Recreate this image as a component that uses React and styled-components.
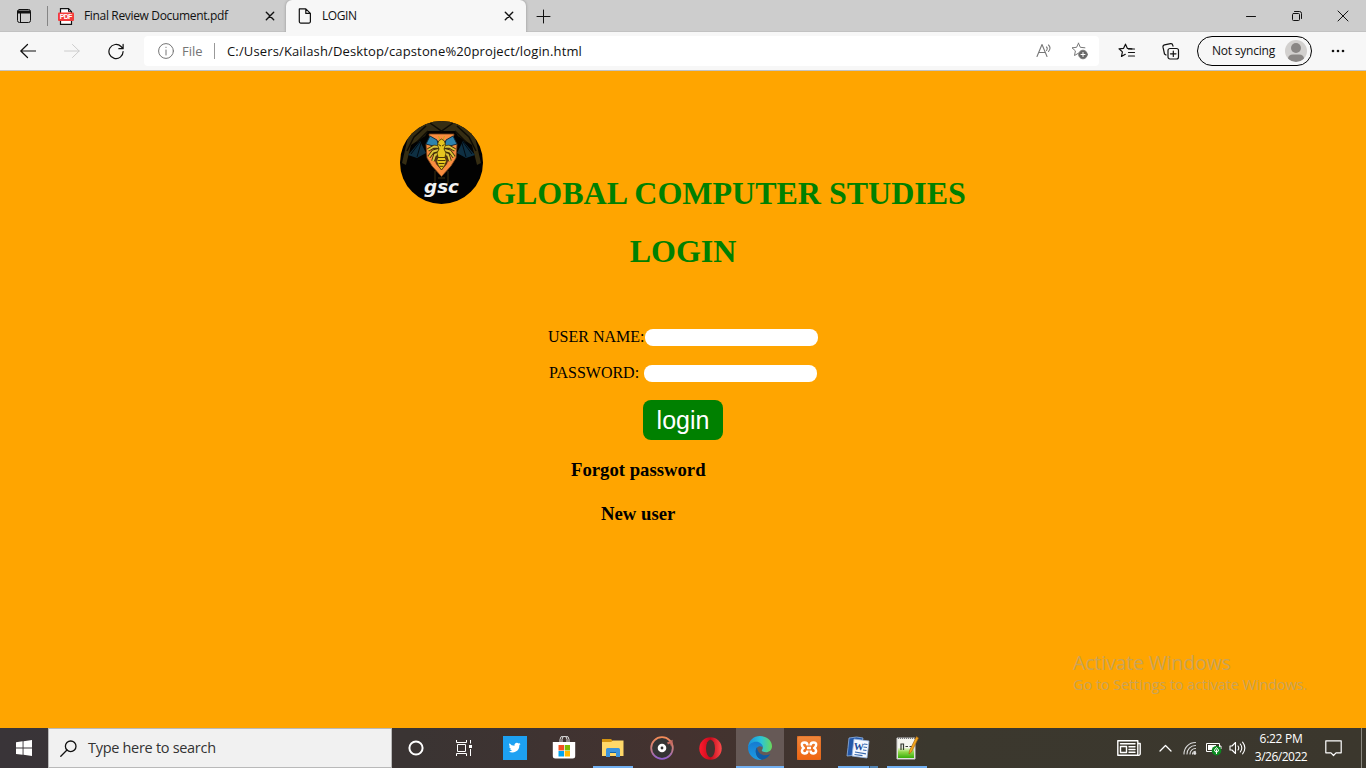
import React from "react";
import styled, { createGlobalStyle } from "styled-components";

const Global = createGlobalStyle`
  * { box-sizing: border-box; }
  body { margin: 0; overflow: hidden; }
  svg { display: block; flex: none; }
`;

const ui = `"Segoe UI", "Open Sans", "Noto Sans", sans-serif`;
const serif = `"Times New Roman", "Liberation Serif", serif`;

const Screen = styled.div`
  width: 1366px;
  height: 768px;
  display: flex;
  flex-direction: column;
  font-family: ${ui};
  color: #000;
`;

/* ---------- browser ---------- */
const TabStrip = styled.div`
  height: 32px;
  flex: none;
  display: flex;
  background: #cdcdcd;
  box-shadow: inset 0 -1px 0 #c2c2c2;
`;
const TabActions = styled.div`
  width: 47px;
  height: 32px;
  display: flex;
  align-items: center;
  padding-left: 16px;
`;
const Tab = styled.div`
  width: ${(p) => p.$width}px;
  height: 32px;
  padding: 0 ${(p) => p.$right}px 0 ${(p) => p.$left}px;
  display: flex;
  align-items: center;
  background: ${(p) => (p.$active ? "#f7f7f7" : "transparent")};
  border-radius: ${(p) => (p.$active ? "6px 6px 0 0" : "0")};
  box-shadow: ${(p) => (p.$active ? "0 0 3px rgba(0,0,0,.3)" : "none")};
  clip-path: inset(0 -4px 0 -4px);
`;
const Divider = styled.div`
  width: 1px;
  height: ${(p) => p.$height}px;
  background: ${(p) => p.$color};
  align-self: center;
  flex: none;
`;
const Label = styled.span`
  font-size: ${(p) => p.$size || 12}px;
  letter-spacing: ${(p) => p.$track || 0}px;
  color: ${(p) => p.$color || "#111"};
  line-height: 18px;
  white-space: nowrap;
`;
const TabTitle = styled(Label)`
  flex: 1;
  margin-left: 10px;
`;
const WindowButtons = styled.div`
  margin-left: auto;
  display: flex;
  align-items: center;
  gap: 30px;
  padding-right: 15px;
`;
const NewTab = styled.div`
  width: 35px;
  display: grid;
  place-items: center;
`;
const Toolbar = styled.div`
  height: 39px;
  flex: none;
  display: flex;
  align-items: center;
  background: #f7f7f7;
  border-bottom: 1px solid #c3c3c3;
`;
const NavButtons = styled.div`
  width: 144px;
  display: flex;
  align-items: center;
  gap: 28px;
  padding-left: 20px;
`;
const Address = styled.div`
  width: 955px;
  height: 30px;
  display: flex;
  align-items: center;
  padding: 0 11px 0 14px;
  background: #fff;
  border-radius: 4px;
`;
const AddressPath = styled(Label)`
  flex: 1;
  margin-left: 12px;
`;
const FileLabel = styled(Label)`
  width: 32px;
  margin-left: 8px;
`;
const Extras = styled.div`
  display: flex;
  align-items: center;
  gap: 26px;
  padding-left: 19px;
`;
const Profile = styled.div`
  width: 115px;
  height: 30px;
  margin-left: 17px;
  padding: 0 4px 0 14px;
  display: flex;
  align-items: center;
  justify-content: space-between;
  border: 1px solid #000;
  border-radius: 15px;
`;
const More = styled.div`
  margin-left: 19px;
`;

/* ---------- page ---------- */
const Page = styled.main`
  position: relative;
  flex: 1;
  display: flex;
  flex-direction: column;
  align-items: center;
  padding-top: 50px;
  background: #ffa500;
  font-family: ${serif};
`;
const Brand = styled.div`
  display: flex;
  align-items: flex-end;
  gap: 8px;
  height: 83px;
`;
const Heading = styled.h1`
  margin: 0;
  font-size: 32px;
  line-height: 37px;
  color: #008000;
  white-space: nowrap;
`;
const BrandName = styled(Heading)`
  margin-bottom: -8px;
`;
const PageTitle = styled(Heading)`
  margin-top: 29px;
`;
const Form = styled.form`
  width: 270px;
  margin-top: 57px;
  display: flex;
  flex-direction: column;
`;
const Field = styled.label`
  height: 20px;
  margin-bottom: 16px;
  padding-left: ${(p) => p.$indent || 0}px;
  display: flex;
  align-items: center;
  gap: ${(p) => p.$gap || 0}px;
  font-size: 16px;
  line-height: 18px;
  white-space: nowrap;
`;
const Input = styled.input`
  width: 173px;
  height: 17px;
  flex: none;
  padding: 1px 6px;
  border: 0;
  border-radius: 8px;
  background: #fff;
  outline: none;
`;
const Submit = styled.button`
  width: 80px;
  height: 40px;
  margin: 1px 0 0 95px;
  padding: 0;
  border: 0;
  border-radius: 8px;
  background: #008000;
  color: #fff;
  font: 25px "Liberation Sans", Arial, sans-serif;
`;
const PageLink = styled.h3`
  margin: ${(p) => p.$top}px 0 0 ${(p) => p.$left}px;
  font-size: 18.72px;
  line-height: 22px;
  white-space: nowrap;
`;
const Watermark = styled.div`
  position: absolute;
  left: 1073px;
  bottom: 33px;
  display: flex;
  flex-direction: column;
  font-family: ${ui};
`;
const WatermarkLine = styled.span`
  font-size: ${(p) => p.$size}px;
  line-height: ${(p) => p.$line}px;
  letter-spacing: ${(p) => p.$track}px;
  color: #c9a35a;
  white-space: nowrap;
`;

/* ---------- taskbar ---------- */
const Taskbar = styled.div`
  height: 40px;
  flex: none;
  display: flex;
  background: linear-gradient(90deg, #393438 0, #3a3433 30%, #44322f 50%, #40352f 60%, #3b382e 68%, #3b372d 100%);
`;
const Start = styled.div`
  width: 48px;
  display: grid;
  place-items: center;
`;
const Search = styled.div`
  width: 344px;
  display: flex;
  align-items: center;
  gap: 11px;
  padding-left: 11px;
  background: #f1f1f1;
  border: 1px solid #b9b9b9;
`;
const TaskButton = styled.div`
  width: ${(p) => p.$width}px;
  height: 40px;
  display: flex;
  flex-direction: column;
  align-items: center;
  background: ${(p) => (p.$active ? "#665956" : "transparent")};
`;
const TaskIcon = styled.div`
  height: 38px;
  padding-top: 2px;
  display: grid;
  place-items: center;
`;
const Running = styled.div`
  width: ${(p) => p.$width}px;
  height: 2px;
  background: ${(p) => (p.$stacked ? "linear-gradient(90deg,#72b0f2 31px,#38526b 31px,#38526b 32px,#5284b4 32px)" : "#72b0f2")};
`;
const Tray = styled.div`
  margin-left: auto;
  display: flex;
  align-items: center;
  height: 40px;
`;
const TrayItem = styled.div`
  width: ${(p) => p.$width}px;
  display: grid;
  place-items: center;
`;
const Clock = styled.div`
  width: 64px;
  display: flex;
  flex-direction: column;
  align-items: center;
`;
const DesktopEdge = styled.div`
  width: 5px;
  height: 40px;
  border-left: 1px solid #8a8880;
`;

const Icon = ({ w = 16, h = w, children, stroke = "#111", sw = 1, box }) => (
  <svg width={w} height={h} viewBox={box || `0 0 ${w} ${h}`} fill="none" stroke={stroke} strokeWidth={sw} strokeLinecap="round" strokeLinejoin="round">
    {children}
  </svg>
);

const Close = () => (
  <Icon w={10} sw={1.4}><path d="M1.300 1.300 8.700 8.700M8.700 1.300 1.300 8.700" /></Icon>
);
const PdfIcon = () => (
  <svg width="16" height="17" viewBox="0 0 16 17">
    <path d="M2.500.7h8l3 3v12.600h-11z" fill="#fff" stroke="#111" strokeWidth="1.200" />
    <path d="M10.500.7v3h3" fill="none" stroke="#111" />
    <rect x="0" y="4.500" width="16" height="8.500" rx="1" fill="#f33b3b" />
    <text x="8" y="11.300" textAnchor="middle" fontSize="7" textLength="12.500" fontWeight="700" fontFamily="Liberation Sans, sans-serif" fill="#fff">PDF</text>
  </svg>
);

const Logo = () => (
  <svg width="83" height="83" viewBox="0 0 83 83">
    <defs><clipPath id="disc"><circle cx="41.500" cy="41.500" r="41.500" /></clipPath></defs>
    <g clipPath="url(#disc)">
      <rect width="83" height="83" fill="#020202" />
      <path d="M20 0h43l12 16 6 26-4 2-5-20-14-9-3-5H28l-3 5-14 9-5 20-4-2 6-26z" fill="#352d13" />
      <path d="M30 2 41.500 10 53 2M26 5 14 16 7 30M57 5l12 11 7 14M28 10 17 21M55 10l11 11" fill="none" stroke="#0d0b04" strokeWidth="1.500" />
      <path d="m20 20-12 14 9 3 9-5zM63 20l12 14-9 3-9-5z" fill="#0e2f42" />
      <path d="m20 21-9 12M21 22l-4 14M63 21l9 12M62 22l4 14" stroke="#020a10" fill="none" />
      <path d="M35 50v12M48 50v12M38 57h7" stroke="#1d180a" strokeWidth="2" />
      <path d="M29 13h25l-1 5 4 5-1 14-5 8-9.500 10.500L32 45l-5-8-1-14 4-5z" fill="#f98d3f" stroke="#7a421a" strokeWidth=".8" />
      <path d="M34 20h15l1 14-3 9-5.500 6-5.500-6-3-9z" fill="#5b3218" />
      <path d="M30 15 37 19 39 26 33 25 26 23zM53 15l-7 4-2 7 6-1 7-2z" fill="#2f83ad" stroke="#092536" strokeWidth=".9" />
      <path d="M40 19 38.500 15M43 19l1.500-4" stroke="#c9a51a" strokeWidth="1" />
      <g fill="none" stroke="#3d2e06" strokeWidth="3.600" strokeLinejoin="round">
        <path d="M39 26 34 25.500 28 29M38.500 29 33 30.500 29 36M39 32l-4 2-2 6" />
        <path d="M44 26l5-.5 6 3.500M44.500 29l5.500 1.500 4 5.500M44 32l4 2 2 6" />
      </g>
      <g fill="none" stroke="#dcc43a" strokeWidth="2" strokeLinejoin="round">
        <path d="M39 26 34 25.500 28 29M38.500 29 33 30.500 29 36M39 32l-4 2-2 6" />
        <path d="M44 26l5-.5 6 3.500M44.500 29l5.500 1.500 4 5.500M44 32l4 2 2 6" />
      </g>
      <path d="M38.500 20 41.500 18l3 2 1 4-1.500 4 2 4-1 4 1.500 4-2 5-3 4-3-4-2-5 1.500-4-1-4 2-4-1.500-4z" fill="#e5c620" stroke="#3d2e06" strokeWidth=".8" />
      <path d="M38.500 23.500 41 25M44.500 23.500 42 25M38 36.500h7M37.500 39.500h8M38.500 42.500h6M39.500 45.300h4" stroke="#4a3805" strokeWidth="1" />
      <text x="41.500" y="71.500" textAnchor="middle" textLength="35" lengthAdjust="spacingAndGlyphs" fontFamily="DejaVu Sans, sans-serif" fontSize="18" fontWeight="700" fontStyle="italic" fill="#f2f2f2">gsc</text>
    </g>
  </svg>
);

const WindowsLogo = () => (
  <svg width="16" height="16" viewBox="0 0 16 16" fill="#fff"><path d="M0 2.200 6.600 1.300v6.300H0zM7.500 1.200 16 0v7.600H7.500zM0 8.500h6.600v6.300L0 13.900zM7.500 8.500H16V16l-8.500-1.200z" /></svg>
);
const TaskView = () => (
  <svg width="16" height="16" viewBox="0 0 16 16" fill="none" stroke="#fff">
    <path d="M.5 0v2.500h10V0M.5 16v-2.500h10V16M1.500 4.500h8v7h-8zM14.500 0v3.500M14.500 9v7" />
    <path d="M13 5h3v3h-3z" fill="#fff" stroke="none" />
  </svg>
);
const Twitter = () => (
  <svg width="24" height="24" viewBox="0 0 24 24"><path fill="#1da1f2" d="M0 0h24v24H0z" /><path transform="translate(5.600 5.600) scale(.5)" fill="#fff" d="M24 4.600a10 10 0 0 1-2.800.8 5 5 0 0 0 2.100-2.700 10 10 0 0 1-3.100 1.200 4.900 4.900 0 0 0-8.400 4.500A14 14 0 0 1 1.700 3.100a4.900 4.900 0 0 0 1.500 6.600 5 5 0 0 1-2.200-.6v.1a4.900 4.900 0 0 0 3.900 4.800 5 5 0 0 1-2.200.1 4.900 4.900 0 0 0 4.600 3.400A10 10 0 0 1 0 19.500a14 14 0 0 0 21.500-12.400A10 10 0 0 0 24 4.600z" /></svg>
);
const Store = () => (
  <svg width="24" height="24" viewBox="0 0 24 24">
    <path d="M8 7V3.500a3.500 3.500 0 0 1 7 0V7M10 7V3.500a3.400 3.400 0 0 1 7 0V7" fill="none" stroke="#ddd" />
    <path d="M.8 6h22.400v14a2.500 2.500 0 0 1-2.500 2.500H3.300A2.500 2.500 0 0 1 .8 20z" fill="#fff" />
    <path fill="#f25022" d="M6.500 9H12v5.500H6.500z" /><path fill="#7fba00" d="M12.700 9H18v5.500h-5.300z" /><path fill="#00a4ef" d="M6.500 15H12v5.500H6.500z" /><path fill="#ffb900" d="M12.700 15H18v5.500h-5.300z" />
  </svg>
);
const Explorer = () => (
  <svg width="22" height="20" viewBox="0 0 22 20">
    <path d="M0 1h9l2 2h10v6H0z" fill="#d49410" /><path d="M0 4h9l2-1.500h10.500V18H0z" fill="#ffd869" />
    <path d="M4 19v-7.500Q4 10 5.500 10h11Q18 10 18 11.500V19h-4v-4H8v4z" fill="#3c93dc" /><path d="M8 14h6v1H8z" fill="#1465a8" />
  </svg>
);
const Groove = () => (
  <svg width="24" height="24" viewBox="0 0 24 24">
    <defs><linearGradient id="ring" x2="0" y2="1"><stop stopColor="#f58b57" /><stop offset=".6" stopColor="#bd7a87" /><stop offset="1" stopColor="#9160d1" /></linearGradient></defs>
    <circle cx="12" cy="12" r="10.800" fill="#343434" stroke="url(#ring)" strokeWidth="1.800" />
    <path d="M17.500 7.500 21.500 5.500v4" fill="none" stroke="#c76b62" strokeWidth="2.200" /><circle cx="12" cy="12" r="4.300" fill="#fff" /><circle cx="12" cy="12" r="1.400" fill="#333" />
  </svg>
);
const Opera = () => (
  <svg width="23" height="23" viewBox="0 0 23 23">
    <defs><linearGradient id="op" x2="1"><stop stopColor="#ff1b2d" /><stop offset=".5" stopColor="#c50a1c" /><stop offset="1" stopColor="#ff4b4b" /></linearGradient></defs>
    <circle cx="11.500" cy="11.500" r="11.200" fill="url(#op)" />
    <ellipse cx="11.500" cy="11.500" rx="4.500" ry="8.700" fill="#43322f" />
  </svg>
);
const Edge = () => (
  <svg width="24" height="24" viewBox="0 0 24 24">
    <defs>
      <linearGradient id="e1" x2="1"><stop stopColor="#1790df" /><stop offset=".55" stopColor="#2bc4d7" /><stop offset="1" stopColor="#69d85a" /></linearGradient>
      <linearGradient id="e2" x2="0" y2="1"><stop stopColor="#167bd0" /><stop offset="1" stopColor="#1c9be2" /></linearGradient>
    </defs>
    <path fill="url(#e1)" d="M0 11.500C.5 4.700 5.600 0 12 0c7.300 0 12 5 12 10.200 0 3.700-2.800 6-6 6-2.700 0-4.200-1-4.200-1.700 0-.6 1-1.200 1-3C14.800 8.700 11.500 7 8 7c-4.500 0-7 2.500-8 4.500z" />
    <path fill="url(#e2)" d="M0 11.500C1 8 4.200 5.700 8.200 5.700c3.600 0 6.600 2.500 6.600 5.500-4-2.500-7 .5-7 4.300 0 4 3 7.700 6.300 8.200C6.500 25 0 19.300 0 11.500z" />
    <path fill="#0e5aa4" d="M9 11.300C6 15 8.500 23 14 23.700c3.700-.6 6.800-2.700 8.300-5.700-7 3.300-12.800-.3-13.300-6.700z" />
  </svg>
);
const Xampp = () => (
  <svg width="24" height="24" viewBox="0 0 24 24"><defs><linearGradient id="xa" x2="0" y2="1"><stop stopColor="#ef873c" /><stop offset="1" stopColor="#ef6410" /></linearGradient></defs><rect width="24" height="24" rx="2" fill="url(#xa)" stroke="#dc6b25" /><path d="M10 12h4M10.500 9.500Q10.500 6.500 7.500 6.500T4.900 9q0 2 2 3-2 1-2 3t2.600 2.500Q10.500 17.500 10.500 14.500M13.500 9.500q0-3 3-3T19.100 9q0 2-2 3 2 1 2 3t-2.600 2.500q-3 0-3-3" fill="none" stroke="#fff" strokeWidth="2.500" strokeLinejoin="round" strokeLinecap="butt" /></svg>
);
const Word = () => (
  <svg width="24" height="24" viewBox="0 0 24 24">
    <path d="M3 2Q11 0 17 2l-4 18Q6 19 1 20 2 12 3 2z" fill="#2458a9" stroke="#92b2df" strokeWidth=".8" />
    <path d="M8 3 23 5 21 22 6 20z" fill="#f5f8fe" stroke="#92b2df" strokeWidth=".8" />
    <path d="m18 8 3.500.5M17.500 11l3.500.5M17 14l3.500.5M9 16l11 1.800M8.500 18.500l8 1.200" stroke="#3869ae" strokeWidth="1.200" />
    <text x="12.700" y="14" textAnchor="middle" transform="rotate(6 12 12)" fontSize="10" fontWeight="700" fontFamily="Liberation Serif, serif" fill="#194b9b">W</text>
  </svg>
);
const NotepadPP = () => (
  <svg width="23" height="24" viewBox="0 0 23 24">
    <defs><linearGradient id="np" x2="0" y2="1"><stop stopColor="#e9f5cf" /><stop offset=".4" stopColor="#8fd849" /><stop offset="1" stopColor="#38ae09" /></linearGradient></defs>
    <path d="M1 2h18v21H1z" fill="#f4f5ee" stroke="#ccc" /><path d="M2 12h16v10H2z" fill="url(#np)" /><path d="M2 2h17" stroke="#777" strokeDasharray="1 1" strokeWidth="2" />
    <path d="M5 7.500V14M5 8h2.500v6M9.500 10.500h2.500M13.500 10.500H16" stroke="#353b30" fill="none" strokeWidth="1.200" /><path d="m20.500.5 2 1.500-7 14-2.500 2 .5-3.500z" fill="#f1a51c" stroke="#9a5d13" strokeWidth=".6" />
  </svg>
);
const News = () => (
  <Icon w={24} h={16} stroke="#fff" sw={1.400}><path d="M.8.8h20v14.400h-20zM20.800 3.500h2.400v10a1.700 1.700 0 0 1-2.400 1.700M3.500 3.800h14.500M3.500 6.500h6v6h-6zM12 6.700h6M12 9.500h6M12 12.300h6" /></Icon>
);
const Wifi = () => (
  <Icon w={14} stroke="#ddd" sw={1.100}><path d="M1 13C1 6.500 6 1.500 12.500 1.500M4 13c0-4.500 3.500-8.500 8.500-8.500M7 13c0-3 2.500-5.500 5.500-5.500M9.500 13c0-1.500 1.500-2.800 3-2.800" /><circle cx="11.800" cy="12.300" r="1" fill="#fff" /></Icon>
);
const Battery = () => (
  <svg width="16" height="15" viewBox="0 0 16 15"><path d="M.5 2.500h13v8H.5zM14 5h1v3h-1" fill="none" stroke="#fff" /><path d="M2 4h8v5H2z" fill="#fff" /><circle cx="10.500" cy="9.700" r="4.800" fill="#0c8b20" /><path d="M10.500 6.500 12.500 9q0 2-2 2t-2-2z" fill="none" stroke="#fff" strokeWidth="1" /><path d="M10.500 8.500v4.500" stroke="#fff" /></svg>
);
const Volume = () => (
  <Icon w={17} h={14} stroke="#fff" sw={1.100}><path d="M1 5h2l3.500-3.500v11L3 9H1zM9 5q1.500 2 0 4M11.300 3q3 4 0 8M13.600 1.200q4.500 5.800 0 11.600" /></Icon>
);

const star = "M7.500 1.200 9.300 5.300 13.900 5.800M7.500 1.200 5.600 5.300 1 5.800 4.400 8.900 3.500 13.500 7.300 11.300";

export default function App() {
  return (
    <Screen>
      <Global />
      <TabStrip>
        <TabActions>
          <Icon w={16}><rect x="1.500" y="1.500" width="13" height="13" rx="2" /><path d="M2 3h12v2H2z" fill="#111" /><path d="M4.500 5v9" /></Icon>
        </TabActions>
        <Divider $height={20} $color="#858585" />
        <Tab $width={238} $left={10} $right={11}>
          <PdfIcon /><TabTitle $track={-0.34}>Final Review Document.pdf</TabTitle><Close />
        </Tab>
        <Tab $active $width={240} $left={12} $right={12}>
          <Icon w={14} h={16} sw={1.200}><path d="M1.600.8h6.200l4.600 4.600v8.200a1.500 1.500 0 0 1-1.500 1.500H2.800a1.500 1.500 0 0 1-1.500-1.500V1zM7.800.8v4.600h4.600" /></Icon>
          <TabTitle $track={-0.4}>LOGIN</TabTitle><Close />
        </Tab>
        <NewTab><Icon w={15}><path d="M7.500 1v13M1 7.500h13" /></Icon></NewTab>
        <WindowButtons>
          <Icon w={14}><path d="M1.500 7.500h9" /></Icon>
          <Icon w={16}><rect x="3.500" y="5.500" width="7" height="7" rx="1" /><path d="M5.500 3.500h5a2 2 0 0 1 2 2v5" /></Icon>
          <Icon w={16}><path d="m3 3 10 10M13 3 3 13" /></Icon>
        </WindowButtons>
      </TabStrip>
      <Toolbar>
        <NavButtons>
          <Icon w={16} sw={1.200}><path d="M15.500 8H.8M7.500 1.500.8 8l6.700 6.500" /></Icon>
          <Icon w={16} stroke="#ccc"><path d="M.5 8h14.700M8.500 1.500 15.200 8l-6.700 6.500" /></Icon>
          <Icon w={17} sw={1.300} box="0 0 18 18"><path d="M16 9a7.500 7.500 0 1 1-2.200-5.300L16 6M16 1.500V6h-4.500" /></Icon>
        </NavButtons>
        <Address>
          <Icon w={16} stroke="#757575"><circle cx="8" cy="8" r="7.400" /><path d="M8 7v5" /><path d="M8 4.200v.3" /></Icon>
          <FileLabel $size={13} $color="#757575">File</FileLabel>
          <Divider $height={16} $color="#999" />
          <AddressPath $size={13} $track={0.14}>C:/Users/Kailash/Desktop/capstone%20project/login.html</AddressPath>
          <Icon w={16} stroke="#777" sw={1.100}><path d="m1 13.500 5-12 5 12M2.800 9.500h6.500M10.500 4q1.500 1.500 0 3.500M12.500 2q3 3 0 6.500" /></Icon>
          <Icon w={36} h={18} stroke="#777" box="-19 0 36 18"><path d={star} /><circle cx="12" cy="12.500" r="4.300" fill="#666" /><path d="M12 10.500v4M10 12.500h4" stroke="#fff" /></Icon>
        </Address>
        <Extras>
          <Icon w={18} h={16} sw={1.200}><path d={star} /><path d="M10.500 6h6M10.500 9.500h6M10.500 13h6" /></Icon>
          <Icon w={18} h={17} sw={1.200}><rect x="6" y="5.500" width="10.500" height="10.500" rx="2" /><path d="M11.300 8v5.500M8.500 10.800H14M4 12 2.500 11 1 4.200a2 2 0 0 1 1.500-2.300L8.500.7a2 2 0 0 1 2.300 1.600l.2.900" /></Icon>
        </Extras>
        <Profile>
          <Label $track={-0.22}>Not syncing</Label>
          <svg width="22" height="22" viewBox="0 0 22 22"><defs><clipPath id="av"><circle cx="11" cy="11" r="11" /></clipPath></defs><g clipPath="url(#av)"><path d="M0 0h22v22H0z" fill="#d2d0ce" /><circle cx="11" cy="8" r="5" fill="#8a8785" /><path d="M3 19q0-4.500 5-4.500h6q5 0 5 4.500-8 6-16 0" fill="#8a8785" /></g></svg>
        </Profile>
        <More><Icon w={14} h={4} stroke="none"><g fill="#111"><circle cx="2" cy="2" r="1.300" /><circle cx="7" cy="2" r="1.300" /><circle cx="12" cy="2" r="1.300" /></g></Icon></More>
      </Toolbar>

      <Page>
        <Brand><Logo /><BrandName>GLOBAL COMPUTER STUDIES</BrandName></Brand>
        <PageTitle>LOGIN</PageTitle>
        <Form>
          <Field $gap={1}>USER NAME:<Input /></Field>
          <Field $indent={1} $gap={5}>PASSWORD:<Input type="password" /></Field>
          <Submit type="button">login</Submit>
          <PageLink $top={19} $left={23}>Forgot password</PageLink>
          <PageLink $top={22} $left={53}>New user</PageLink>
        </Form>
        <Watermark>
          <WatermarkLine $size={19.5} $line={24} $track={-0.15}>Activate Windows</WatermarkLine>
          <WatermarkLine $size={14.5} $line={20} $track={-0.1}>Go to Settings to activate Windows.</WatermarkLine>
        </Watermark>
      </Page>

      <Taskbar>
        <Start><WindowsLogo /></Start>
        <Search>
          <Icon w={17} sw={1.300}><circle cx="10.700" cy="6.300" r="5.300" /><path d="M7 10 .8 16.200" /></Icon>
          <Label $size={14.5} $track={-0.3} $color="#333">Type here to search</Label>
        </Search>
        <TaskButton $width={48}><TaskIcon><Icon w={16} stroke="#fff" sw={2}><circle cx="8" cy="8" r="6.600" /></Icon></TaskIcon></TaskButton>
        <TaskButton $width={48}><TaskIcon><TaskView /></TaskIcon></TaskButton>
        <TaskButton $width={54}><TaskIcon><Twitter /></TaskIcon></TaskButton>
        <TaskButton $width={44}><TaskIcon><Store /></TaskIcon></TaskButton>
        <TaskButton $width={54}><TaskIcon><Explorer /></TaskIcon><Running $width={40} /></TaskButton>
        <TaskButton $width={44}><TaskIcon><Groove /></TaskIcon></TaskButton>
        <TaskButton $width={52}><TaskIcon><Opera /></TaskIcon></TaskButton>
        <TaskButton $active $width={48}><TaskIcon><Edge /></TaskIcon><Running $width={48} /></TaskButton>
        <TaskButton $width={50}><TaskIcon><Xampp /></TaskIcon></TaskButton>
        <TaskButton $width={48}><TaskIcon><Word /></TaskIcon><Running $width={40} $stacked /></TaskButton>
        <TaskButton $width={50}><TaskIcon><NotepadPP /></TaskIcon><Running $width={40} /></TaskButton>
        <Tray>
          <TrayItem $width={48}><News /></TrayItem>
          <TrayItem $width={24}><Icon w={13} h={8} stroke="#fff" sw={1.300}><path d="m1 7 5.500-5.500L12 7" /></Icon></TrayItem>
          <TrayItem $width={25}><Wifi /></TrayItem>
          <TrayItem $width={23}><Battery /></TrayItem>
          <TrayItem $width={24}><Volume /></TrayItem>
          <Clock><Label $color="#fff" $track={-0.3}>6:22 PM</Label><Label $color="#fff" $track={-0.5}>3/26/2022</Label></Clock>
          <TrayItem $width={40}><Icon w={17} stroke="#fff" sw={1.200}><path d="M.8.8h15.400v12H11l-2.500 2.700L6 12.800H.8z" /></Icon></TrayItem>
          <TrayItem $width={8} />
          <DesktopEdge />
        </Tray>
      </Taskbar>
    </Screen>
  );
}
